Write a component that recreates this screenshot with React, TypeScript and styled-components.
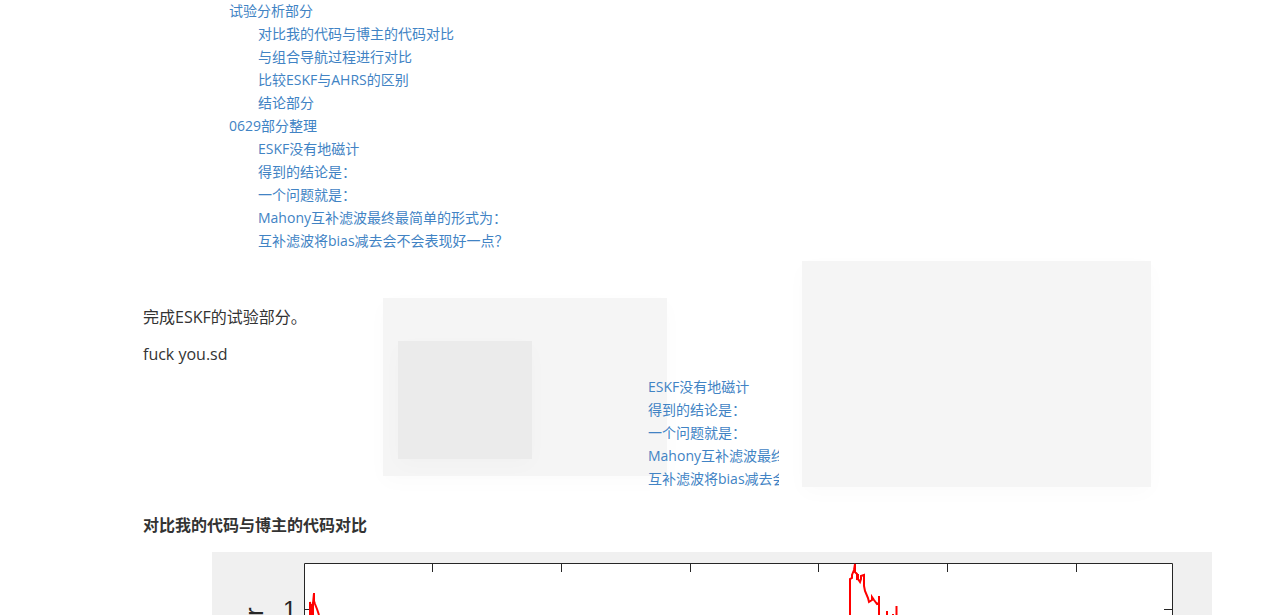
import React from "react";
import styled, { createGlobalStyle } from "styled-components";

const GlobalStyle = createGlobalStyle`
  * { box-sizing: border-box; }
  body {
    margin: 0;
    background: #fff;
    color: #333;
    font-family: "Open Sans", "Noto Sans CJK SC", sans-serif;
    font-size: 16px;
    line-height: 25px;
  }
`;

const Page = styled.main`
  padding: 0 57px 0 143px;
  overflow: hidden;
`;

const Toc = styled.nav`
  margin-top: -1px;
  padding-left: 86px;
`;

const TocList = styled.ul<{ $nested?: boolean }>`
  list-style: none;
  margin: 0;
  padding: 0 0 0 ${(p) => (p.$nested ? "29px" : "0")};
  font-size: 14px;
  line-height: 23px;
  white-space: nowrap;
`;

const TocLink = styled.a`
  color: #4183c4;
  text-decoration: none;
`;

const Row = styled.section`
  display: flex;
  align-items: flex-start;
  margin-top: 9px;
  padding-right: 61px;
`;

const Intro = styled.div`
  flex: 0 0 240px;
  padding-top: 44px;
`;

const Paragraph = styled.p`
  margin: 0 0 12px;
`;

const Panel = styled.div`
  background: #f5f5f5;
  box-shadow: 0 6px 20px rgba(0, 0, 0, 0.02);
`;

const MediumPanel = styled(Panel)`
  flex: 0 0 284px;
  height: 178px;
  margin-top: 37px;
  padding: 43px 15px;
`;

const SmallPanel = styled(Panel)`
  width: 134px;
  height: 118px;
  background: #ebebeb;
`;

const LargePanel = styled(Panel)`
  flex: 1;
  height: 226px;
  margin-left: 23px;
`;

const TocExcerpt = styled.nav`
  position: relative;
  flex: 0 0 131px;
  margin: 114px 0 0 -19px;
  overflow: hidden;
`;

const Heading = styled.h5`
  margin: 23px 0 14px;
  font-size: 16px;
  font-weight: 700;
`;

const Figure = styled.figure`
  margin: 0 0 0 69px;
`;

const Plot = styled.svg`
  display: block;
  width: 100%;
  height: auto;
`;

type Entry = { text: string; children?: string[] };

const recent = [
  "ESKF没有地磁计",
  "得到的结论是：",
  "一个问题就是：",
  "Mahony互补滤波最终最简单的形式为：",
  "互补滤波将bias减去会不会表现好一点？",
];

const entries: Entry[] = [
  {
    text: "试验分析部分",
    children: ["对比我的代码与博主的代码对比", "与组合导航过程进行对比", "比较ESKF与AHRS的区别", "结论部分"],
  },
  { text: "0629部分整理", children: recent },
];

const Links = ({ items, nested }: { items: string[]; nested?: boolean }) => (
  <TocList $nested={nested}>
    {items.map((text) => (
      <li key={text}>
        <TocLink href={`#${text}`}>{text}</TocLink>
      </li>
    ))}
  </TocList>
);

const ErrorPlot = () => (
  <Plot viewBox="0 0 1000 63" role="img">
    <rect width="1000" height="63" fill="#f0f0f0" />
    <rect x="92" y="11" width="869" height="52" fill="#fff" />
    <path
      d="M92.5 63V11.5H960.5V63M220.5 12v8M349.5 12v8M478.5 12v8M606.5 12v8M735.5 12v8M864.5 12v8M93 57.5h8M952 57.5h8"
      fill="none"
      stroke="#262626"
    />
    <path
      d="M98 63V50l2 12 2-21v8l1 3 2 5 2 6M99 63V52M101 63V50M638 63V27l2-1v-3l2-5 1-6v8l2 2v6l1-6v5l2 3 1-3v-3l3-1v11l1 5 3 7 1 4 3-2v-3l2 3 3 4 2-1V44l0 19M675 63v-4M681 63v-1M684.500 63V54"
      fill="none"
      stroke="#f00"
      strokeWidth="2"
    />
    <text x="71" y="66" fontFamily="Liberation Sans" fontSize="24" fill="#262626">
      1
    </text>
    <text transform="translate(51 64) rotate(-90)" fontFamily="Liberation Sans" fontSize="26" fill="#262626">
      r
    </text>
  </Plot>
);

export default function App() {
  return (
    <>
      <GlobalStyle />
      <Page>
        <Toc>
          {entries.map((entry) => (
            <React.Fragment key={entry.text}>
              <Links items={[entry.text]} />
              <Links items={entry.children ?? []} nested />
            </React.Fragment>
          ))}
        </Toc>
        <Row>
          <Intro>
            <Paragraph>完成ESKF的试验部分。</Paragraph>
            <Paragraph>fuck you.sd</Paragraph>
          </Intro>
          <MediumPanel>
            <SmallPanel />
          </MediumPanel>
          <TocExcerpt>
            <Links items={recent} />
          </TocExcerpt>
          <LargePanel />
        </Row>
        <Heading>对比我的代码与博主的代码对比</Heading>
        <Figure>
          <ErrorPlot />
        </Figure>
      </Page>
    </>
  );
}
